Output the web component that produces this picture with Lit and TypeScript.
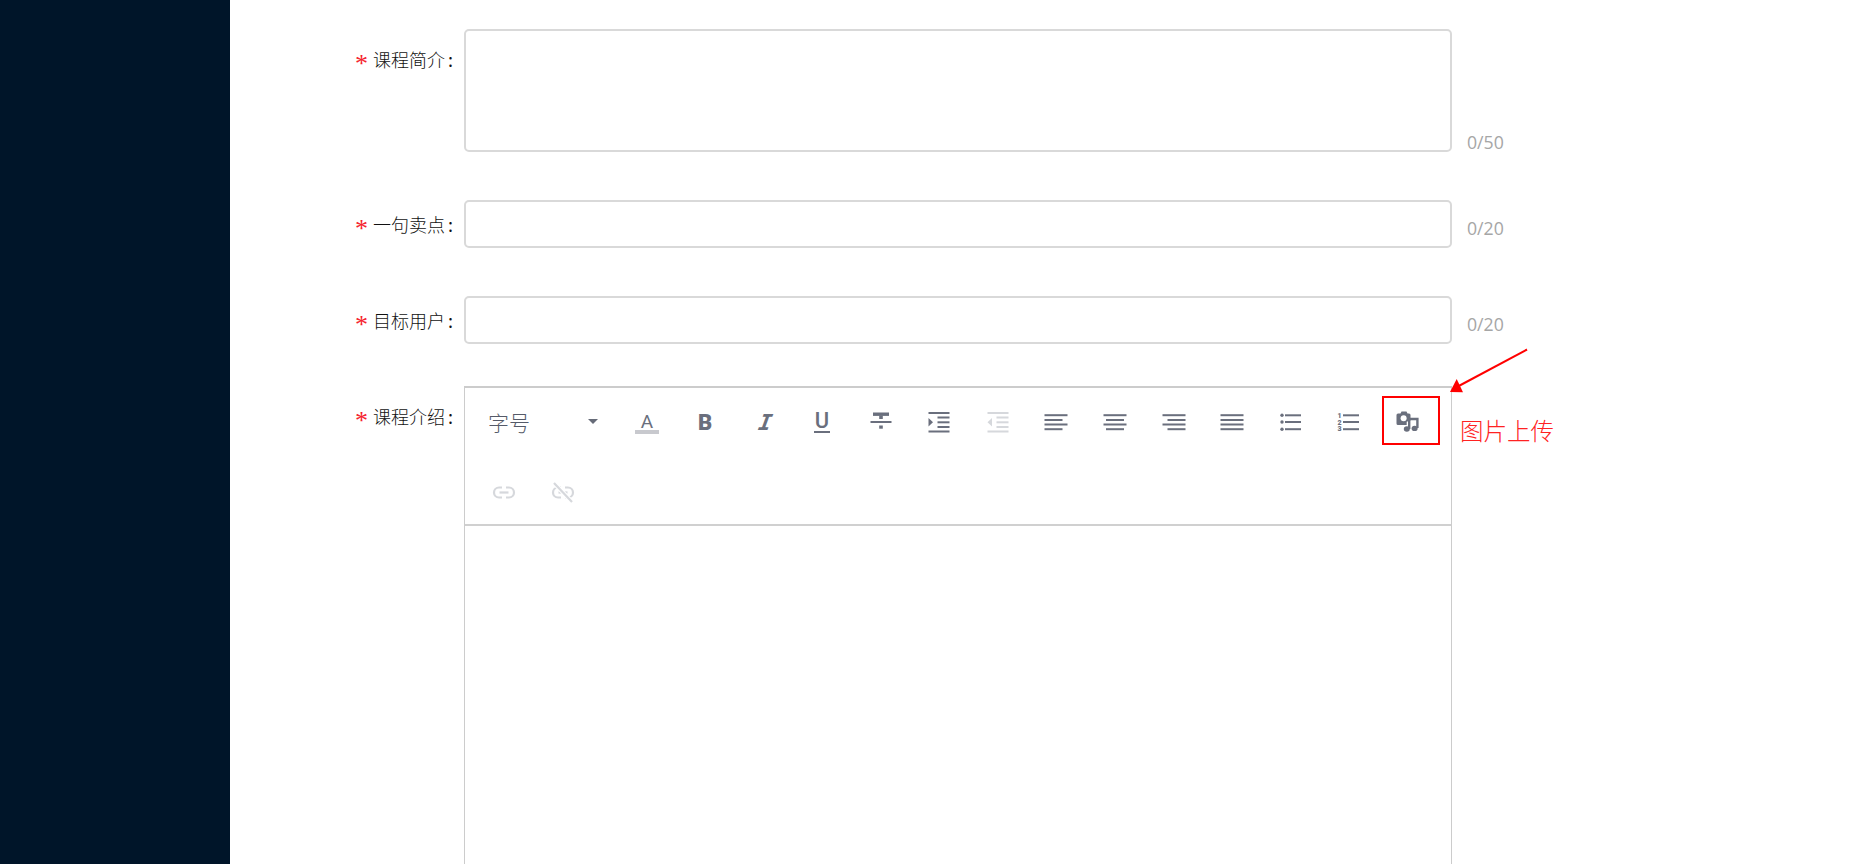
import { LitElement, html, css, svg } from "lit";
import { customElement } from "lit/decorators.js";

const bars = (rows: [number, number][], ys = [7.2, 12, 16.5, 21.2]) =>
  rows.map(
    ([x, w], i) => svg`<rect x=${x} y=${ys[i] - 1} width=${w} height="2" />`
  );

const L = 3.5;
const alignIcons = {
  left: bars([[L, 23], [L, 18], [L, 23], [L, 18]]),
  center: bars([[L, 23], [6, 18], [L, 23], [6, 18]]),
  right: bars([[L, 23], [8.5, 18], [L, 23], [8.5, 18]]),
  justify: bars([[L, 23], [L, 23], [L, 23], [L, 23]]),
};

const indent = (out: boolean) => svg`
  <rect x="4.5" y="4" width="21" height="2"/>
  <rect x="13.5" y="8.5" width="12" height="2"/>
  <rect x="13.5" y="13.3" width="12" height="2"/>
  <rect x="13.5" y="18" width="12" height="2"/>
  <rect x="4.5" y="22.5" width="21" height="2"/>
  ${out
    ? svg`<path d="M9 10V18.5L4.5 14.3Z"/>`
    : svg`<path d="M4.5 10V18.5L9 14.3Z"/>`}
`;

const linkShape = svg`
  <path d="M13 9.5H10a5 5 0 0 0 0 10H13M17 9.5h3a5 5 0 0 1 0 10H17" fill="none" stroke="currentColor" stroke-width="2.2"/>
  <path d="M10.5 14.5h9" fill="none" stroke="currentColor" stroke-width="2.2"/>
`;

@customElement("app-root")
export class AppRoot extends LitElement {
  static styles = css`
    :host {
      display: block;
      height: 864px;
      overflow: hidden;
      font-family: "Noto Sans CJK SC", "Noto Sans", sans-serif;
      background: #fff;
    }
    .page { display: flex; height: 864px; position: relative; overflow: hidden; }
    .side { width: 230px; flex: none; background: #001529; }
    .main { flex: 1; padding-top: 29px; }
    .row {
      display: grid;
      grid-template-columns: 234px 988px auto;
      margin-bottom: 48px;
    }
    .row.short { margin-bottom: 42px; }
    .label {
      display: flex;
      justify-content: flex-end;
      align-items: center;
      height: 48px;
      padding-right: 11px;
      font-size: 18px;
      font-weight: 300;
      color: #111;
      white-space: nowrap;
    }
    .label.tall { margin-top: 6px; }
    .star {
      color: #f5222d;
      font: 26px/16px "Liberation Serif", serif;
      margin-right: 5px;
      padding-top: 10px;
    }
    .colon { margin-left: 3px; font-weight: 400; }
    .field {
      border: 2px solid #d9d9d9;
      border-radius: 5px;
      box-sizing: border-box;
      height: 48px;
      background: #fff;
    }
    .field.area { height: 123px; }
    .count {
      margin-left: 15px;
      font: 17.7px/24px "Open Sans", "Noto Sans", sans-serif;
      color: #a6a6a6;
    }
    .count.line { padding-top: 16px; }
    .count.end { align-self: end; margin-bottom: -2px; }
    .editor {
      border: solid #ccc;
      border-width: 2px 1.5px 0;
      box-sizing: border-box;
      height: 600px;
    }
    .toolbar {
      display: flex;
      flex-wrap: wrap;
      align-content: flex-start;
      row-gap: 1px;
      box-sizing: border-box;
      height: 138px;
      padding: 0 0 0 10px;
      border-bottom: 2px solid #d0d0d0;
    }
    .select {
      width: 142.4px;
      height: 69px;
      display: flex;
      align-items: center;
      justify-content: space-between;
      box-sizing: border-box;
      padding: 0 19px 2px 13px;
      font-size: 21px;
      font-weight: 300;
      line-height: 30px;
      color: #555a68;
    }
    .caret {
      width: 0;
      height: 0;
      border: 5px solid transparent;
      border-top: 5.5px solid #666b78;
      border-bottom: 0;
    }
    .btn {
      width: 58.55px;
      height: 69px;
      display: flex;
      align-items: center;
      justify-content: center;
      color: #6a6f7d;
    }
    .btn.off { color: #d6d8dc; }
    .btn svg { width: 30px; height: 30px; fill: currentColor; display: block; }
    .btn text { font-family: "Roboto", "Liberation Sans", sans-serif; }
    .btn text.mono { font-family: "DejaVu Sans Mono", monospace; }
    .mark {
      position: absolute;
      left: 1382px;
      top: 396px;
      width: 58px;
      height: 49px;
      box-sizing: border-box;
      border: 2px solid #f00;
    }
    .note {
      position: absolute;
      left: 1460px;
      top: 413px;
      font: 300 23.5px/34px "Noto Sans CJK SC", serif;
      color: #f22;
      white-space: nowrap;
    }
    .arrow {
      position: absolute;
      left: 1440px;
      top: 340px;
      width: 100px;
      height: 60px;
    }
  `;

  private icon(body: unknown, off = false) {
    return html`<div class="btn ${off ? "off" : ""}"><svg viewBox="0 0 30 30">${body}</svg></div>`;
  }

  private label(text: string, tall = false) {
    return html`<div class="label ${tall ? "tall" : ""}"><span class="star">*</span>${text}<span class="colon">:</span></div>`;
  }

  render() {
    return html`
      <div class="page">
        <aside class="side"></aside>
        <main class="main">
          <div class="row">
            ${this.label("课程简介", true)}
            <div class="field area"></div>
            <div class="count end">0/50</div>
          </div>
          <div class="row">
            ${this.label("一句卖点")}
            <div class="field"></div>
            <div class="count line">0/20</div>
          </div>
          <div class="row short">
            ${this.label("目标用户")}
            <div class="field"></div>
            <div class="count line">0/20</div>
          </div>
          <div class="row">
            ${this.label("课程介绍", true)}
            <div class="editor">
              <div class="toolbar">
                <div class="select"><span>字号</span><span class="caret"></span></div>
                ${this.icon(svg`
                  <text x="15" y="19.5" text-anchor="middle" font-size="19" font-weight="400">A</text>
                  <rect x="3" y="22" width="24" height="4" fill="#c8c9ce"/>`)}
                ${this.icon(svg`<text x="15" y="21.5" text-anchor="middle" font-size="22" font-weight="900">B</text>`)}
                ${this.icon(svg`<text class="mono" transform="translate(15 21.5) skewX(-10)" text-anchor="middle" font-size="22" font-weight="700" font-style="italic">I</text>`)}
                ${this.icon(svg`
                  <text x="15" y="19.5" text-anchor="middle" font-size="22" font-weight="500">U</text>
                  <rect x="7" y="23" width="16" height="2"/>`)}
                ${this.icon(svg`
                  <rect x="7" y="4.5" width="16" height="3.4"/>
                  <rect x="13.2" y="7.5" width="3.6" height="3.5"/>
                  <rect x="4.5" y="13" width="21" height="2"/>
                  <rect x="13.2" y="17.5" width="3.6" height="3.2"/>`)}
                ${this.icon(indent(false))}
                ${this.icon(indent(true), true)}
                ${this.icon(alignIcons.left)}
                ${this.icon(alignIcons.center)}
                ${this.icon(alignIcons.right)}
                ${this.icon(alignIcons.justify)}
                ${this.icon(svg`
                  <circle cx="6" cy="7.3" r="1.7"/><circle cx="6" cy="14" r="1.7"/><circle cx="6" cy="21.2" r="1.7"/>
                  <rect x="9" y="6.3" width="16" height="2"/><rect x="9" y="13" width="16" height="2"/><rect x="9" y="20.2" width="16" height="2"/>`)}
                ${this.icon(svg`
                  <text x="5.5" y="10" font-size="7" font-weight="900" text-anchor="middle">1</text>
                  <text x="5.5" y="16.6" font-size="7" font-weight="900" text-anchor="middle">2</text>
                  <text x="5.5" y="23.4" font-size="7" font-weight="900" text-anchor="middle">3</text>
                  <rect x="9" y="6.3" width="16" height="2"/><rect x="9" y="13" width="16" height="2"/><rect x="9" y="20.2" width="16" height="2"/>`)}
                ${this.icon(svg`
                  <g transform="translate(-1 0)">
                  <path d="M6 5.5h2.5l1-2h5l1 2H17a1.5 1.5 0 0 1 1.5 1.5v5.5l-3.8 1.2V17H6a1.5 1.5 0 0 1-1.5-1.5V7A1.5 1.5 0 0 1 6 5.5Z"/>
                  <circle cx="11.6" cy="10.3" r="3" fill="#fff"/>
                  <path d="M17.2 21V11h8.2V20" fill="none" stroke="currentColor" stroke-width="2.4"/>
                  <ellipse cx="14.8" cy="21" rx="3" ry="2.7"/>
                  <ellipse cx="22.6" cy="20.4" rx="3" ry="2.7"/>
                  </g>`)}
                ${this.icon(linkShape, true)}
                ${this.icon(svg`
                  ${linkShape}
                  <path d="M6 5l18 19" fill="none" stroke="#fff" stroke-width="4.5"/>
                  <path d="M6 5l18 19" fill="none" stroke="currentColor" stroke-width="2.2"/>`, true)}
              </div>
            </div>
          </div>
        </main>
        <div class="mark"></div>
        <svg class="arrow" viewBox="0 0 100 60">
          <path d="M87 9.5L15 48" stroke="#f00" stroke-width="2" fill="none"/>
          <path d="M10 52L16.7 39L23 52.3Z" fill="#f00"/>
        </svg>
        <div class="note">图片上传</div>
      </div>
    `;
  }
}
